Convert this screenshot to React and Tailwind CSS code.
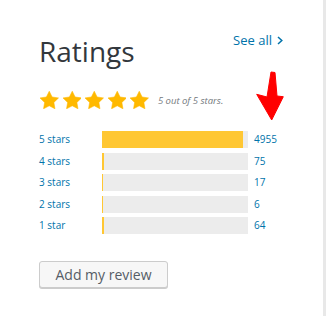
const ratings = [
  { label: '5 stars', count: 4955 },
  { label: '4 stars', count: 75 },
  { label: '3 stars', count: 17 },
  { label: '2 stars', count: 6 },
  { label: '1 star', count: 64 },
];

const total = ratings.reduce((sum, r) => sum + r.count, 0);

function Star() {
  return (
    <svg width="18.5" height="18" viewBox="2 2 20 19.02" className="shrink-0">
      <polygon
        points="12,2 15.09,8.26 22,9.27 17,14.14 18.18,21.02 12,17.77 5.82,21.02 7,14.14 2,9.27 8.91,8.26"
        fill="#ffb900"
        stroke="#ffb900"
        strokeWidth="0.6"
        strokeLinejoin="round"
      />
    </svg>
  );
}

export default function App() {
  return (
    <div
      className="relative w-[326px] h-[316px] bg-white border-r-[3px] border-[#e8e8e8]"
      style={{ fontFamily: '"Open Sans", "Noto Sans", sans-serif' }}
    >
      <div className="pl-[39px] pt-[33px]">
        {/* Header */}
        <div className="flex justify-between items-start pr-[40px]">
          <h2 className="mt-[4px] text-[28px] leading-[28px] text-[#32373c] font-normal">Ratings</h2>
          <a className="flex items-center gap-[5px] mt-[1px] text-[13px] leading-[13px] text-[#0073aa]">
            See all
            <svg width="6" height="9" viewBox="0 0 6 9">
              <path d="M1 1l3.8 3.5L1 8" fill="none" stroke="#0073aa" strokeWidth="1.5" />
            </svg>
          </a>
        </div>

        {/* Stars */}
        <div className="mt-[26px] h-[18px] flex items-center">
          <div className="flex gap-[4.1px] ml-[1px]">
            <Star />
            <Star />
            <Star />
            <Star />
            <Star />
          </div>
          <span className="ml-[9px] mt-[2px] text-[9.5px] italic text-[#72777c]">5 out of 5 stars.</span>
        </div>

        {/* Counts */}
        <div className="mt-[22px] flex flex-col gap-[4.5px]">
          {ratings.map((r) => (
            <div key={r.label} className="flex items-center h-[17px]">
              <span className="w-[63px] text-[10px] text-[#0073aa]">{r.label}</span>
              <div className="w-[146px] h-[17px] bg-[#ececec]">
                <div
                  className="h-full bg-[#ffc733]"
                  style={{ width: Math.max((r.count / total) * 146, 1) }}
                />
              </div>
              <span className="ml-[6px] text-[10px] text-[#0073aa]">{r.count}</span>
            </div>
          ))}
        </div>

        {/* Button */}
        <button className="mt-[26.5px] w-[129px] h-[27px] bg-[#f7f7f7] border border-[#cccccc] rounded-[3px] shadow-[0_1px_0_#cccccc] text-[14px] leading-[25px] text-[#555d66]">
          Add my review
        </button>
      </div>

      {/* red annotation arrow */}
      <svg className="absolute left-[250px] top-[66px]" width="42" height="60" viewBox="0 0 42 60">
        <path
          d="M21 6 L25 6.5 L27 30 L33.3 30.7 L21.7 54 L6.7 28.3 L17 31 Z"
          fill="#ff0000"
          stroke="#ff0000"
          strokeLinejoin="round"
          strokeWidth="1"
        />
      </svg>
    </div>
  );
}
